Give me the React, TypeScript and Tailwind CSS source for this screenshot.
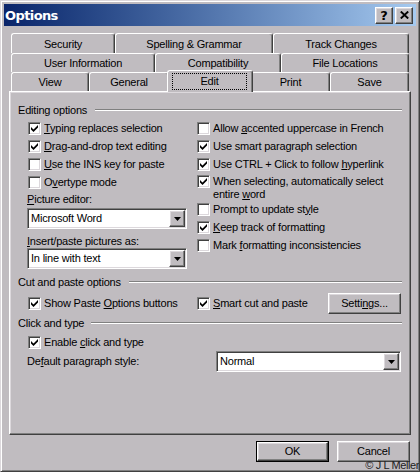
import React from "react";

const raised =
  "border border-t-white border-l-white border-r-[#404040] border-b-[#404040] shadow-[inset_-1px_-1px_0_#808080,inset_1px_1px_0_#dcd8dc]";
const sunken =
  "border border-t-[#808080] border-l-[#808080] border-r-white border-b-white shadow-[inset_1px_1px_0_#404040,inset_-1px_-1px_0_#dcd8dc]";

function Box({ checked }: { checked?: boolean }) {
  return (
    <div className={`w-[13px] h-[13px] bg-white flex items-center justify-center shrink-0 ${sunken}`}>
      {checked && (
        <svg width="7" height="7" viewBox="0 0 7 7">
          <path d="M0 2 L2.5 4.5 L7 0 L7 2.6 L2.5 7 L0 4.6 Z" fill="black" />
        </svg>
      )}
    </div>
  );
}

function Row({ checked, children, ml = "" }: { checked?: boolean; children: React.ReactNode; ml?: string }) {
  return (
    <div className={`flex items-center h-[18px] gap-[3px] ${ml}`}>
      <Box checked={checked} />
      <span className="whitespace-nowrap">{children}</span>
    </div>
  );
}

function Header({ children, gap }: { children: React.ReactNode; gap: string }) {
  return (
    <div className={`flex items-center h-[14px] ${gap}`}>
      <span className="whitespace-nowrap">{children}</span>
      <div className="flex-1 h-[2px] border-t border-t-[#808080] border-b border-b-white" />
    </div>
  );
}

function Arrow() {
  return (
    <svg width="7" height="4" viewBox="0 0 7 4">
      <path d="M0 0 H7 L3.5 4 Z" fill="black" />
    </svg>
  );
}

function Select({ value, w }: { value: string; w: string }) {
  return (
    <div className={`flex h-[21px] bg-white p-[1px] ${w} ${sunken}`}>
      <div className="flex-1 flex items-center pl-[2px]">{value}</div>
      <div className={`w-[16px] h-full bg-[#c0bcc0] flex items-center justify-center ${raised}`}>
        <Arrow />
      </div>
    </div>
  );
}

function Tab({ w, label, pt = "" }: { w: string; label: string; pt?: string }) {
  return (
    <div
      className={`h-full flex items-center justify-center border-t border-l border-r border-t-white border-l-white border-r-[#404040] shadow-[inset_-1px_0_0_#808080] rounded-t-[3px] ${w} ${pt}`}
    >
      {label}
    </div>
  );
}

export default function App() {
  return (
    <div className="relative w-[420px] h-[472px] overflow-hidden bg-[#c0bcc0] border border-t-[#dcd8dc] border-l-[#dcd8dc] border-r-[#404040] border-b-[#404040] shadow-[inset_1px_1px_0_#ffffff,inset_-1px_-1px_0_#808080] p-[3px] flex flex-col text-[11px] leading-[13px] tracking-[-0.2px] text-black font-['Liberation_Sans',Arial,sans-serif]">
      {/* Title bar */}
      <div className="h-[22px] shrink-0 flex items-center bg-linear-to-r from-[#0a246a] to-[#a6caf0] pl-[1px] pr-[3px]">
        <span className="font-['DejaVu_Sans',sans-serif] font-bold text-[13px] text-white tracking-[-0.6px]">Options</span>
        <div className="ml-auto flex gap-[2px]">
          <div className={`w-[18px] h-[17px] bg-[#c0bcc0] flex items-center justify-center ${raised}`}>
            <span className="font-['DejaVu_Sans',sans-serif] font-bold text-[13px] leading-none tracking-normal">?</span>
          </div>
          <div className={`w-[18px] h-[17px] bg-[#c0bcc0] flex items-center justify-center ${raised}`}>
            <svg width="9" height="8" viewBox="0 0 9 8">
              <path d="M0.8 0.5 L8.2 7.5 M8.2 0.5 L0.8 7.5" stroke="black" strokeWidth="1.9" />
            </svg>
          </div>
        </div>
      </div>

      {/* Tabs */}
      <div className="mt-[7px] mx-[5px] flex flex-col shrink-0">
        <div className="flex h-[20px] pl-[2px]">
          <Tab w="w-[104px]" label="Security" pt="pt-[2px]" />
          <Tab w="w-[158px]" label="Spelling & Grammar" pt="pt-[2px]" />
          <Tab w="w-[136px]" label="Track Changes" pt="pt-[2px]" />
        </div>
        <div className="flex h-[19px] pl-[2px]">
          <Tab w="w-[144px]" label="User Information" pt="pt-[1px]" />
          <Tab w="w-[126px]" label="Compatibility" pt="pt-[1px]" />
          <Tab w="w-[128px]" label="File Locations" pt="pt-[1px]" />
        </div>
        <div className="flex h-[19px] pl-[2px] items-end">
          <Tab w="w-[78px]" label="View" />
          <Tab w="w-[80px]" label="General" />
          <div className="relative z-10 w-[86px] -mx-[2px] h-[22px] -mb-[1px] bg-[#c0bcc0] flex border-t border-l border-r border-t-white border-l-white border-r-[#404040] shadow-[inset_-1px_0_0_#808080] rounded-t-[3px] pl-[4px] pr-[5px] pt-[2px] pb-[2px]">
            <div className="flex-1 border border-dotted border-black flex items-center justify-center">Edit</div>
          </div>
          <Tab w="w-[79px]" label="Print" />
          <Tab w="w-[79px]" label="Save" />
        </div>
      </div>

      {/* Panel */}
      <div className={`relative mx-[5px] h-[344px] shrink-0 px-[8px] pt-[11px] flex flex-col ${raised}`}>
        <Header gap="gap-[8px]">Editing options</Header>
        <div className="mt-[2px] grid grid-cols-[179px_1fr]">
          <div className="flex flex-col">
            <Row checked ml="ml-[10px]">
              <u>T</u>yping replaces selection
            </Row>
            <Row checked ml="ml-[10px]">
              <u>D</u>rag-and-drop text editing
            </Row>
            <Row ml="ml-[10px]">
              <u>U</u>se the INS key for paste
            </Row>
            <Row ml="ml-[10px]">
              O<u>v</u>ertype mode
            </Row>
            <div className="ml-[9px] mt-[1px] h-[14px] flex items-center">
              <span>
                <u>P</u>icture editor:
              </span>
            </div>
            <div className="ml-[9px] mt-[2px]">
              <Select value="Microsoft Word" w="w-[160px]" />
            </div>
            <div className="ml-[9px] mt-[5px] h-[14px] flex items-center">
              <span>
                <u>I</u>nsert/paste pictures as:
              </span>
            </div>
            <div className="ml-[9px]">
              <Select value="In line with text" w="w-[160px]" />
            </div>
          </div>
          <div className="flex flex-col">
            <Row>
              Allow <u>a</u>ccented uppercase in French
            </Row>
            <Row checked>Use smart paragraph selection</Row>
            <Row checked>
              Use CTRL + Click to follow <u>h</u>yperlink
            </Row>
            <div className="flex items-start h-[27px] gap-[3px] pt-[2px]">
              <Box checked />
              <span className="leading-[13px] whitespace-nowrap">
                When selecting, automatically select
                <br />
                entire <u>w</u>ord
              </span>
            </div>
            <Row>
              Prompt to update st<u>y</u>le
            </Row>
            <Row checked>
              <u>K</u>eep track of formatting
            </Row>
            <Row>
              Mark <u>f</u>ormatting inconsistencies
            </Row>
          </div>
        </div>

        <div className="mt-[6px]">
          <Header gap="gap-[8px]">Cut and paste options</Header>
        </div>
        <div className="mt-[4px] h-[21px] grid grid-cols-[179px_1fr] items-center">
          <Row checked ml="ml-[10px]">
            Show Paste <u>O</u>ptions buttons
          </Row>
          <div className="flex items-center">
            <Row checked>
              <u>S</u>mart cut and paste
            </Row>
            <div className={`ml-auto mr-[1px] w-[73px] h-[21px] flex items-center justify-center ${raised}`}>
              Setti<u>n</u>gs...
            </div>
          </div>
        </div>

        <div className="mt-[2px]">
          <Header gap="gap-[7px]">Click and type</Header>
        </div>
        <div className="mt-[3px]">
          <Row checked ml="ml-[10px]">
            Enable <u>c</u>lick and type
          </Row>
        </div>
        <div className="flex items-center h-[21px]">
          <span className="ml-[9px]">
            De<u>f</u>ault paragraph style:
          </span>
          <div className="ml-auto mr-[1px]">
            <Select value="Normal" w="w-[185px]" />
          </div>
        </div>
      </div>

      {/* Buttons */}
      <div className="mt-[6px] mx-[5px] flex justify-end gap-[8px] pr-[1px] shrink-0">
        <div className="w-[73px] h-[21px] border border-black">
          <div className={`w-full h-full flex items-center justify-center ${raised}`}>OK</div>
        </div>
        <div className={`w-[73px] h-[21px] flex items-center justify-center ${raised}`}>Cancel</div>
      </div>

      <div className="absolute bottom-0 right-0 text-[11px] leading-none tracking-[-0.4px] text-[#202020] whitespace-nowrap">
        © J L Meller
      </div>
    </div>
  );
}
